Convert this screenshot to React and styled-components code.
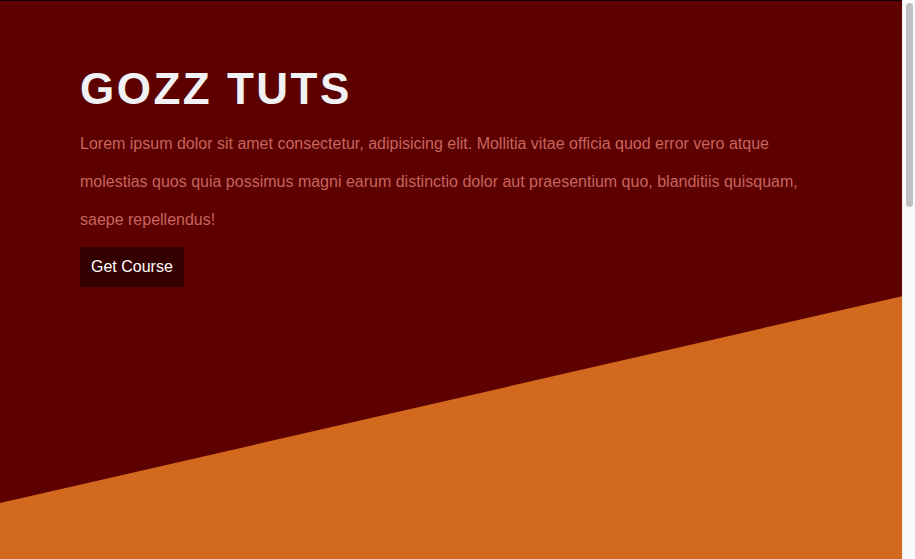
import React from "react";
import styled, { createGlobalStyle } from "styled-components";

const GlobalStyle = createGlobalStyle`
  * {
    box-sizing: border-box;
  }
  body {
    margin: 0;
    font-family: "Liberation Sans", Arial, sans-serif;
    background-color: #d2691e;
    overflow: hidden;
  }
`;

const Frame = styled.div`
  display: flex;
  height: 100vh;
`;

const Page = styled.main`
  flex: 1;
  height: 100vh;
  overflow: hidden;
`;

const ScrollTrack = styled.div`
  width: 13px;
  flex-shrink: 0;
  background-color: #fafafa;
  border-left: 1px solid #ededed;
  padding: 3px 2px 0 3px;
`;

const ScrollThumb = styled.div`
  height: 204px;
  border-radius: 4px;
  background-color: #bfc0c4;
`;

const Hero = styled.section`
  height: 100vh;
  background-color: #5c0000;
  border-top: 1px solid #120000;
  clip-path: polygon(0 0, 100% 0, 100% 53%, 0 90%);
  padding: 63px 80px 0;
`;

const Title = styled.h1`
  margin: 0;
  font-size: 44px;
  font-weight: 700;
  letter-spacing: 2.5px;
  color: #f1f1f3;
`;

const Text = styled.p`
  margin: 10.5px 0 0;
  max-width: 730px;
  font-size: 16px;
  line-height: 38.4px;
  color: #c8645e;
`;

const Button = styled.button`
  margin-top: 7px;
  height: 40px;
  padding: 0 11px;
  border: none;
  background-color: #350000;
  color: #ffffff;
  font-family: inherit;
  font-size: 16px;
  cursor: pointer;
`;

export default function App() {
  return (
    <Frame>
      <GlobalStyle />
      <Page>
        <Hero>
          <Title>GOZZ TUTS</Title>
          <Text>
            Lorem ipsum dolor sit amet consectetur, adipisicing elit. Mollitia
            vitae officia quod error vero atque molestias quos quia possimus
            magni earum distinctio dolor aut praesentium quo, blanditiis
            quisquam, saepe repellendus!
          </Text>
          <Button>Get Course</Button>
        </Hero>
      </Page>
      <ScrollTrack>
        <ScrollThumb />
      </ScrollTrack>
    </Frame>
  );
}
